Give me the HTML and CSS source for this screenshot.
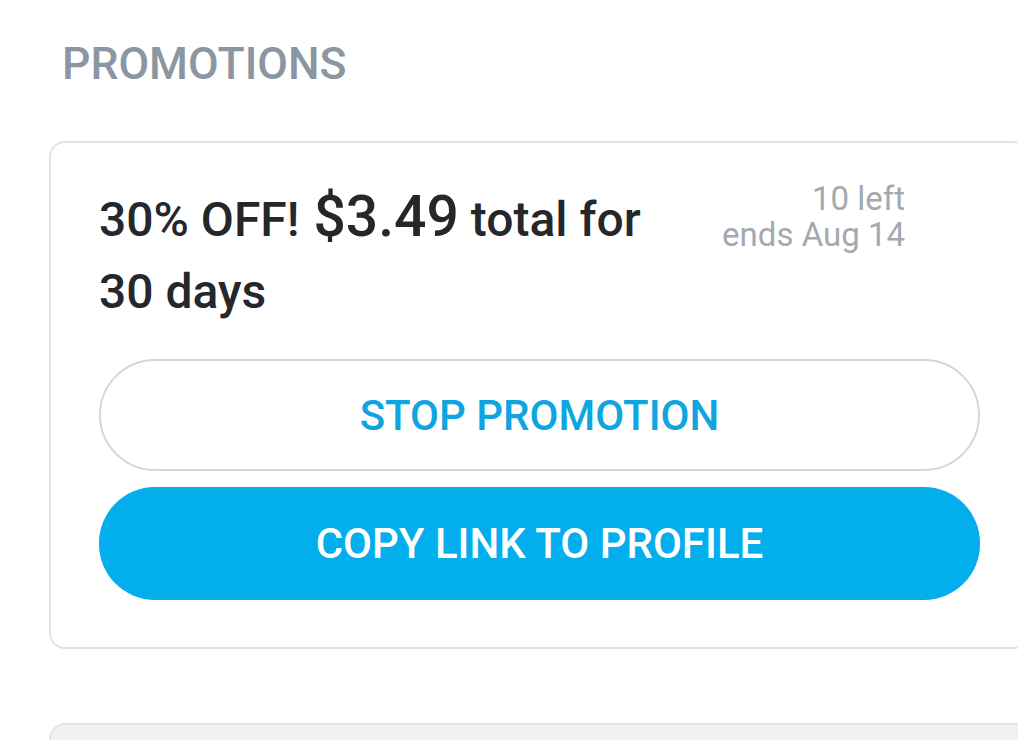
FILE: index.html
```html
<!DOCTYPE html>
<html>
<head>
<meta charset="utf-8">
<link rel="stylesheet" href="styles.css">
</head>
<body>
<div class="page">
  <h2 class="section-title">PROMOTIONS</h2>
  <div class="card">
    <div class="promo-head">
      <div class="promo-title">30% OFF! <span class="price">$3.49</span> total for 30 days</div>
      <div class="promo-meta">
        <div>10 left</div>
        <div>ends Aug 14</div>
      </div>
    </div>
    <div class="actions">
      <button class="btn btn-outline">STOP PROMOTION</button>
      <button class="btn btn-primary">COPY LINK TO PROFILE</button>
    </div>
  </div>
  <div class="card card-muted"></div>
</div>
</body>
</html>
```
FILE: styles.css
```css
html, body {
  margin: 0;
  padding: 0;
  background: #ffffff;
  overflow: hidden;
}
body {
  width: 1018px;
  height: 740px;
  font-family: Roboto, "Noto Sans", Arial, sans-serif;
}
.page {
  padding: 42px 0 0 49px;
}
.section-title {
  margin: 0 0 54px 13px;
  font-size: 44.5px;
  line-height: 45px;
  font-weight: 500;
  color: #8c95a2;
}
.card {
  box-sizing: border-box;
  width: 981px;
  border: 2px solid #e1e4e7;
  border-radius: 16px;
  background: #fff;
  padding: 41px 48px 47px 48px;
}
.card-muted {
  margin-top: 74px;
  height: 120px;
  background: #f0f1f3;
  padding: 0;
}
.promo-head {
  display: flex;
  align-items: flex-start;
  gap: 50px;
}
.promo-title {
  flex: 1;
  font-size: 48px;
  line-height: 72px;
  font-weight: 500;
  color: #25272b;
}
.price {
  font-size: 57px;
  line-height: 1;
  margin-left: 2px;
}
.promo-meta {
  margin-top: -3px;
  margin-right: 75px;
  text-align: right;
  font-size: 33px;
  line-height: 36px;
  color: #a4a9b1;
}
.actions {
  margin-top: 31px;
  display: flex;
  flex-direction: column;
  gap: 16px;
}
.btn {
  box-sizing: border-box;
  height: 112px;
  width: 100%;
  border-radius: 56px;
  font-family: Roboto, "Noto Sans", Arial, sans-serif;
  font-size: 42px;
  font-weight: 500;
  cursor: pointer;
}
.btn-outline {
  background: #fff;
  border: 2px solid #d4d6d8;
  color: #0ea5e1;
}
.btn-primary {
  background: #03aeec;
  border: none;
  color: #fff;
  height: 113px;
}
```
